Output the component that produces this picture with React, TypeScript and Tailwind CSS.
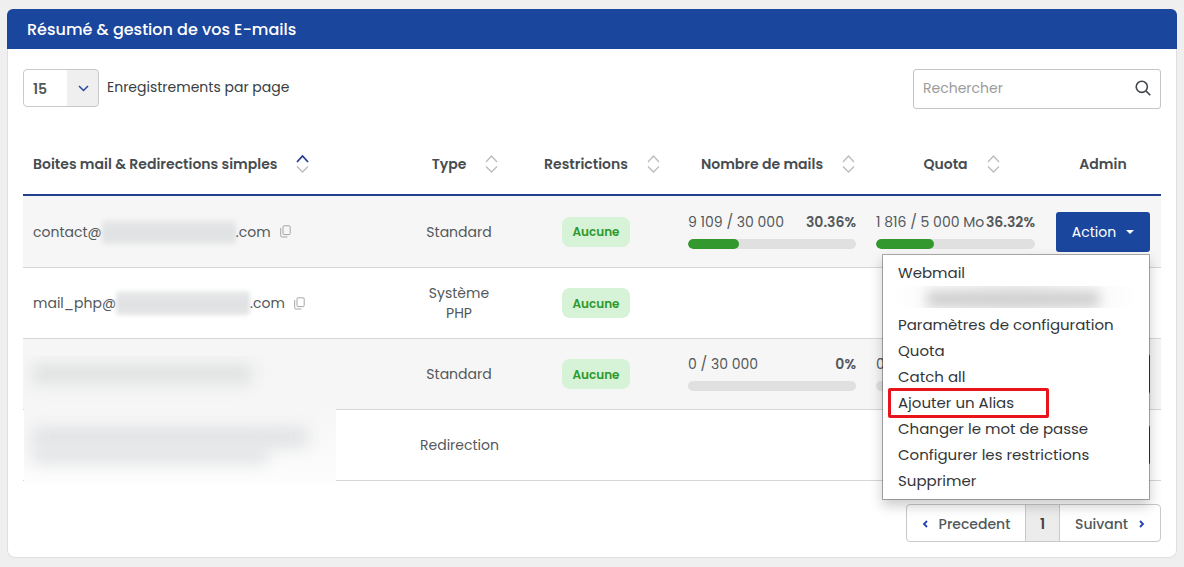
import React from "react";

type Usage = { label: string; percent: number; percentLabel: string };

function SortIcon({ active = false }: { active?: boolean }) {
  return (
    <svg width="13" height="18" viewBox="0 0 13 18" fill="none" strokeWidth="1.3" aria-hidden="true" className="shrink-0">
      <path d="M1 7 6.5 1 12 7" stroke={active ? "#23408f" : "#b9bcbe"} strokeWidth={active ? 1.8 : 1.3} />
      <path d="M1 11.5 6.5 17 12 11.5" stroke="#b9bcbe" />
    </svg>
  );
}

function CopyIcon() {
  return (
    <svg width="11" height="13" viewBox="0 0 11 13" fill="none" stroke="#a3a6a8" strokeWidth="1" aria-hidden="true">
      <rect x="3" y="0.8" width="7.2" height="8.8" rx="1" />
      <path d="M0.7 3v7.7q0 1.3 1.3 1.3h5.4" />
    </svg>
  );
}

function HeadCell({ label, sort }: { label: string; sort?: boolean }) {
  return (
    <th scope="col" className="h-[63px] border-b-2 border-[#23408f] p-0 font-semibold text-[#474c50]">
      {sort ? (
        <button type="button" className="inline-flex items-center gap-[19px] pl-3 font-semibold">
          {label}
          <SortIcon />
        </button>
      ) : (
        label
      )}
    </th>
  );
}

function UsageBar({ usage }: { usage: Usage }) {
  return (
    <div className="mb-[3px] text-left">
      <div className="flex justify-between whitespace-nowrap leading-5">
        <span>{usage.label}</span>
        <span className="font-semibold">{usage.percentLabel}</span>
      </div>
      <div className="mt-[7px] h-2.5 overflow-hidden rounded-full bg-[#e0e0e0]">
        <div className="h-full rounded-full bg-[#33992f]" style={{ width: `${usage.percent}%` }} />
      </div>
    </div>
  );
}

function Badge() {
  return (
    <span className="inline-flex h-[30px] w-[68px] items-center justify-center rounded-lg bg-[#d6f3d7] pt-px text-xs font-semibold text-[#2d9a2c]">
      Aucune
    </span>
  );
}

function Email({ name }: { name: string }) {
  return (
    <div className="flex items-center">
      <span>{name}@</span>
      <span className="h-6 w-[134px]">
        <span className="block h-full w-full rounded-sm bg-linear-to-b from-[#e9eaeb] via-[#dfe1e2] to-[#e5e6e7] blur-[2px]" />
      </span>
      <span className="relative">.com</span>
      <button type="button" aria-label="Copier" className="ml-[9px]">
        <CopyIcon />
      </button>
    </div>
  );
}

function HiddenAddresses() {
  return (
    <div className="absolute top-[17px] left-px z-10 h-32 w-[312px] overflow-hidden bg-linear-to-b from-[#f6f6f6] from-30% via-[#f7f7f7] to-[#fdfdfd]">
      <div className="mt-2 ml-2 h-5 w-[220px] bg-[#dfe1e1] blur-[8px]" />
      <div className="mt-[43px] ml-2 h-5 w-[276px] bg-[#e0e2e4] blur-[8px]" />
      <div className="ml-2 h-4 w-[236px] bg-[#e0e2e4] blur-[8px]" />
    </div>
  );
}

const menuItems = [
  "Webmail",
  null,
  "Paramètres de configuration",
  "Quota",
  "Catch all",
  "Ajouter un Alias",
  "Changer le mot de passe",
  "Configurer les restrictions",
  "Supprimer",
];

function ActionMenu() {
  return (
    <ul className="absolute top-full right-0 z-20 mt-0.5 w-[268px] border border-black/30 bg-white bg-clip-padding py-[5px] text-left text-[15px] text-[#333638] shadow-[0_6px_12px_rgba(0,0,0,0.2)]">
      {menuItems.map((item) => (
        <li key={item ?? "masked"} className="relative h-[26px] leading-[26px]">
          {item ? (
            <a href="#" className="block px-[15px] whitespace-nowrap">
              {item}
            </a>
          ) : (
            <span className="mx-3 flex h-[22px] items-center overflow-hidden bg-linear-to-r from-white via-[#f0f0f0] to-white pl-8">
              <span className="mt-1 h-4 w-[172px] bg-[#cfcfcf] blur-[6px]" />
            </span>
          )}
          {item === "Ajouter un Alias" && (
            <span className="pointer-events-none absolute -top-0.5 left-[5px] h-[30px] w-[161px] rounded-xs border-3 border-[#e8131b]" />
          )}
        </li>
      ))}
    </ul>
  );
}

function ActionButton({ open = false }: { open?: boolean }) {
  return (
    <div className="relative inline-block align-middle">
      <button
        type="button"
        aria-expanded={open}
        className="flex h-10 w-[94px] items-center justify-center gap-2.5 rounded-[3px] bg-[#1b469d] text-sm text-white"
      >
        Action
        <svg width="8" height="4" viewBox="0 0 8 4" fill="currentColor" aria-hidden="true">
          <path d="M0 0h8L4 4z" />
        </svg>
      </button>
      {open && <ActionMenu />}
    </div>
  );
}

type Row = {
  name?: string;
  type: string;
  restricted?: boolean;
  mails?: Usage;
  quota?: Usage;
  action?: "open" | "closed";
};

const rows: Row[] = [
  {
    name: "contact",
    type: "Standard",
    restricted: true,
    mails: { label: "9 109 / 30 000", percent: 30.36, percentLabel: "30.36%" },
    quota: { label: "1 816 / 5 000 Mo", percent: 36.32, percentLabel: "36.32%" },
    action: "open",
  },
  { name: "mail_php", type: "Système PHP", restricted: true },
  {
    type: "Standard",
    restricted: true,
    mails: { label: "0 / 30 000", percent: 0, percentLabel: "0%" },
    quota: { label: "0 / 5 000 Mo", percent: 0, percentLabel: "0%" },
    action: "closed",
  },
  { type: "Redirection", action: "closed" },
];

export default function App() {
  return (
    <div className="min-h-screen bg-[#efefef] px-[7px] pt-[9px] pb-2 font-[Poppins,Inter,sans-serif] text-sm text-[#53585b]">
      <section className="rounded-lg border border-t-0 border-[#dfdfdf] bg-white">
        <h1 className="-mx-px flex h-10 items-center rounded-t-md bg-[#1b469d] px-5 pt-px text-base font-medium text-white">
          Résumé &amp; gestion de vos E-mails
        </h1>
        <div className="px-[15px] pt-5 pb-[15px]">
          <div className="flex items-start justify-between">
            <div className="flex items-center gap-2">
              <span className="relative">
                <select
                  id="page-size"
                  defaultValue="15"
                  className="block h-[38px] w-[76px] appearance-none rounded border border-[#c9c9c9] bg-linear-to-r from-white from-58% to-[#efefef] to-58% pt-px pl-[9px] font-semibold"
                >
                  <option>15</option>
                  <option>30</option>
                  <option>50</option>
                </select>
                <svg
                  width="11"
                  height="7"
                  viewBox="0 0 11 7"
                  fill="none"
                  stroke="#2545a0"
                  strokeWidth="1.5"
                  aria-hidden="true"
                  className="pointer-events-none absolute top-4 right-2.5"
                >
                  <path d="M1 1 5.5 5.5 10 1" />
                </svg>
              </span>
              <label htmlFor="page-size" className="pb-0.5 text-[#393d40]">
                Enregistrements par page
              </label>
            </div>
            <div className="flex h-10 w-[248px] items-center rounded-[3px] border border-[#c4c4c4] px-[9px] pb-0.5">
              <input
                type="search"
                aria-label="Rechercher"
                placeholder="Rechercher"
                className="min-w-0 flex-1 outline-none placeholder:text-[#9b9b9b]"
              />
              <svg width="16" height="16" viewBox="0 0 16 16" fill="none" stroke="#43474a" strokeWidth="1.6" aria-hidden="true">
                <circle cx="6.8" cy="6.8" r="5.6" />
                <path d="m10.9 10.9 4.4 4.4" />
              </svg>
            </div>
          </div>

          <table className="mt-6 w-full table-fixed border-separate border-spacing-0 text-center">
            <colgroup>
              <col />
              <col className="w-[110px]" />
              <col className="w-[164px]" />
              <col className="w-[188px]" />
              <col className="w-[179px]" />
              <col className="w-[116px]" />
            </colgroup>
            <thead>
              <tr>
                <th scope="col" className="h-[63px] border-b-2 border-[#23408f] p-0 text-left text-[#474c50]">
                  <button type="button" className="inline-flex items-center gap-[19px] pl-2.5 font-semibold">
                    Boites mail &amp; Redirections simples
                    <SortIcon active />
                  </button>
                </th>
                <HeadCell label="Type" sort />
                <HeadCell label="Restrictions" sort />
                <HeadCell label="Nombre de mails" sort />
                <HeadCell label="Quota" sort />
                <HeadCell label="Admin" />
              </tr>
            </thead>
            <tbody className="[&_td]:h-[71px] [&_td]:border-b [&_td]:border-[#d5d7d8] [&_td]:py-0 [&_tr:first-child>td]:h-[72px] [&_tr:nth-child(odd)]:bg-[#f6f6f6]">
              {rows.map((row, index) => (
                <tr key={index}>
                  <td className="relative px-2.5 text-left">
                    {row.name && <Email name={row.name} />}
                    {index === 2 && <HiddenAddresses />}
                  </td>
                  <td className="px-4 leading-5">{row.type}</td>
                  <td className="px-2.5">{row.restricted && <Badge />}</td>
                  <td className="px-2.5">{row.mails && <UsageBar usage={row.mails} />}</td>
                  <td className="px-2.5">{row.quota && <UsageBar usage={row.quota} />}</td>
                  <td className="px-2.5">{row.action && <ActionButton open={row.action === "open"} />}</td>
                </tr>
              ))}
            </tbody>
          </table>

          <nav aria-label="Pagination" className="mt-[23px] flex justify-end">
            <div className="flex h-[38px] overflow-hidden rounded border border-[#c9c9c9] font-medium">
              <button type="button" className="flex w-[118px] items-center justify-center gap-[11px] pt-px">
                <svg width="6" height="8" viewBox="0 0 6 8" fill="none" stroke="#2342b0" strokeWidth="1.8" aria-hidden="true">
                  <path d="M5 1 2 4 5 7" />
                </svg>
                Precedent
              </button>
              <button
                type="button"
                aria-current="page"
                className="w-[35px] border-x border-[#c9c9c9] bg-[#ececec] pt-px font-semibold text-[#3e4245]"
              >
                1
              </button>
              <button type="button" className="flex w-[100px] items-center justify-center gap-[11px] pt-px">
                Suivant
                <svg width="6" height="8" viewBox="0 0 6 8" fill="none" stroke="#2342b0" strokeWidth="1.8" aria-hidden="true">
                  <path d="M1 1 4 4 1 7" />
                </svg>
              </button>
            </div>
          </nav>
        </div>
      </section>
    </div>
  );
}
